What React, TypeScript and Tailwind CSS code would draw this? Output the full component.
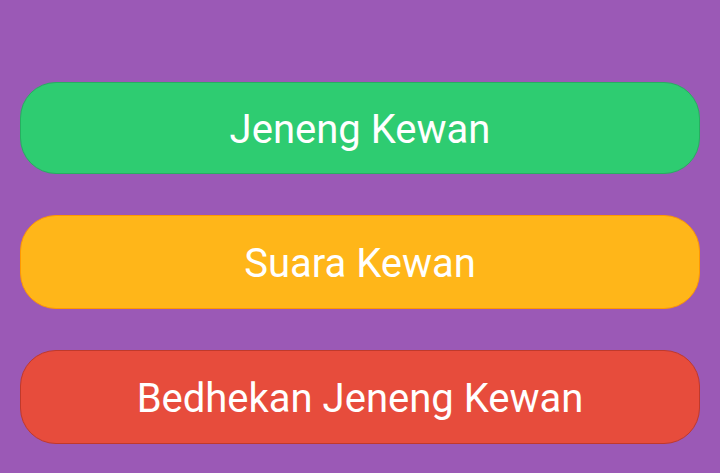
const buttons = [
  { label: 'Jeneng Kewan', cls: 'bg-[#2ecc71] border-[#27ae60] h-[92px]' },
  { label: 'Suara Kewan', cls: 'bg-[#ffb619] border-[#ff9800] h-[94px]' },
  { label: 'Bedhekan Jeneng Kewan', cls: 'bg-[#e74c3c] border-[#c0392b] h-[94px]' },
];

export default function App() {
  return (
    <div className="w-[720px] h-[473px] bg-[#9b59b6] pt-[82px] pl-[20px] flex flex-col gap-[41px] overflow-hidden">
      {buttons.map((b) => (
        <button
          key={b.label}
          className={`w-[680px] rounded-[36px] border flex items-center justify-center pt-[3px] text-white text-[40px] font-['Roboto',sans-serif] ${b.cls}`}
        >
          {b.label}
        </button>
      ))}
    </div>
  );
}
